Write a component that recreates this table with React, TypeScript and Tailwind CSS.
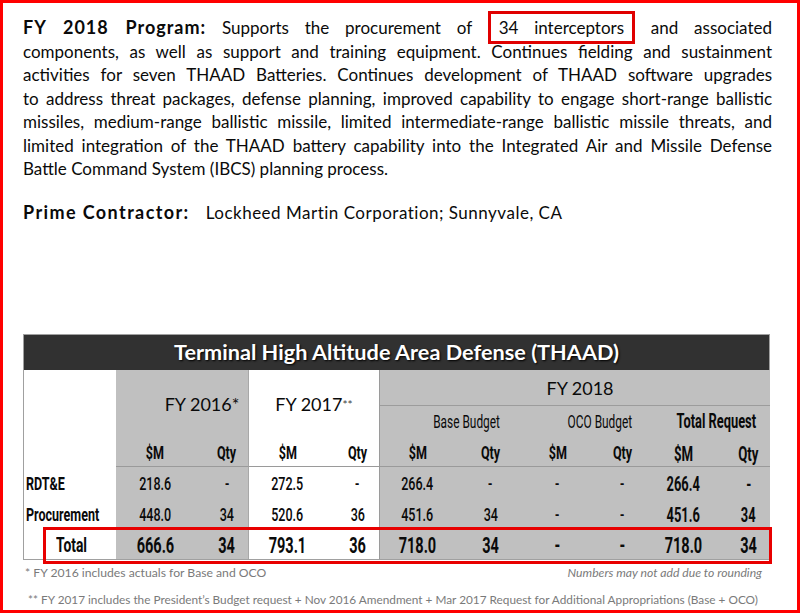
import React from 'react';

const cond = "font-['Roboto',sans-serif]";

type Row = { label: string; vals: string[]; total?: boolean };

const rows: Row[] = [
	{ label: 'RDT&E', vals: ['218.6', '-', '272.5', '-', '266.4', '-', '-', '-', '266.4', '-'] },
	{ label: 'Procurement', vals: ['448.0', '34', '520.6', '36', '451.6', '34', '-', '-', '451.6', '34'] },
	{ label: 'Total', vals: ['666.6', '34', '793.1', '36', '718.0', '34', '-', '-', '718.0', '34'], total: true },
];

// background + nudge per value column so the figures sit where the report puts them
const colBg = ['bg-[#c0c0c0]', 'bg-[#c0c0c0]', 'bg-white', 'bg-white', 'bg-[#c0c0c0]', 'bg-[#c0c0c0]', 'bg-[#c0c0c0]', 'bg-[#c0c0c0]', 'bg-[#c0c0c0]', 'bg-[#c0c0c0]'];
const colPad = ['pl-[12px]', 'pl-[24px]', 'pl-[12px]', 'pl-[22px]', 'pl-[10px]', 'pl-[26px]', 'pl-[30px]', 'pl-[30px]', 'pl-[22px]', 'pl-[22px]'];
const colEdge = ['', 'border-r border-[#a8a8a8]', '', 'border-r border-[#9a9a9a]', '', '', '', '', '', ''];

const justify = 'text-justify [text-align-last:justify]';

// the report uses a very narrow face (Agency FB); squeeze Roboto to match
function Narrow({ children, left }: { children: React.ReactNode; left?: boolean }) {
	return <span className={`inline-block whitespace-nowrap scale-x-[0.66] ${left ? 'origin-left' : 'origin-center'}`}>{children}</span>;
}

export default function App() {
	return (
		<div className="w-[800px] h-[613px] bg-white border-[3px] border-[#ff0000] pt-[13px] pl-[20px] pr-[25px] font-['Lato',sans-serif] text-[#0a0a0a]">
			<div className="text-[17px] leading-[23.5px]">
				<div className={justify}>
					<b className="text-[18px] tracking-[1px]">FY 2018 Program:</b> Supports the procurement of{' '}
					<span className="border-[3px] border-[#e00000] px-[8px] py-[3px]">34 interceptors</span> and associated
				</div>
				<div className={justify}>components, as well as support and training equipment. Continues fielding and sustainment</div>
				<div className={justify}>activities for seven THAAD Batteries. Continues development of THAAD software upgrades</div>
				<div className={justify}>to address threat packages, defense planning, improved capability to engage short-range ballistic</div>
				<div className={justify}>missiles, medium-range ballistic missile, limited intermediate-range ballistic missile threats, and</div>
				<div className={justify}>limited integration of the THAAD battery capability into the Integrated Air and Missile Defense</div>
				<div>Battle Command System (IBCS) planning process.</div>
			</div>

			<div className="mt-[20px] text-[17px] leading-[23.5px]">
				<b className="text-[18px] tracking-[1.4px]">Prime Contractor:</b>
				<span className="ml-[16px] tracking-[0.5px]">Lockheed Martin Corporation; Sunnyvale, CA</span>
			</div>

			<div className="relative mt-[110px] w-[747px]">
				<div className="border border-[#a0a0a0]">
					<div className="h-[35px] bg-[#313131] flex items-center justify-center text-white font-bold text-[21.7px] [text-shadow:1px_1px_2px_#000]">
						Terminal High Altitude Area Defense (THAAD)
					</div>
					<div className="grid grid-cols-[92px_66px_67px_65px_66px_65px_65px_65px_65px_65px_65px] grid-rows-[36px_31px_30px_32px_30px_30px]">
						<div className="row-span-3 bg-white" />
						<div className="col-span-2 row-span-2 bg-[#c0c0c0] border-r border-[#a8a8a8] flex items-center justify-center text-[18px] pl-[40px] pt-[2px]">
							FY 2016*
						</div>
						<div className="col-span-2 row-span-2 bg-white border-r border-[#9a9a9a] flex items-center justify-center text-[18px] pt-[2px]">
							FY 2017<span className="text-[12px] self-start mt-[24px] text-[#444]">**</span>
						</div>
						<div className="col-span-6 bg-[#c0c0c0] border-b border-[#9c9c9c] flex items-center justify-center text-[18px] pl-[10px] pt-[2px]">
							FY 2018
						</div>
						<div className={`col-span-2 bg-[#c0c0c0] flex items-center justify-center pl-[44px] text-[18px] ${cond}`}>
							<Narrow>Base Budget</Narrow>
						</div>
						<div className={`col-span-2 bg-[#c0c0c0] flex items-center justify-center pl-[50px] text-[18px] ${cond}`}>
							<Narrow>OCO Budget</Narrow>
						</div>
						<div className={`col-span-2 bg-[#c0c0c0] flex items-center justify-center pl-[22px] text-[19.5px] font-bold ${cond}`}>
							<Narrow>Total Request</Narrow>
						</div>
						{['$M', 'Qty', '$M', 'Qty', '$M', 'Qty', '$M', 'Qty', '$M', 'Qty'].map((h, i) => (
							<div
								key={'h' + i}
								className={`${colBg[i]} ${colPad[i]} ${colEdge[i]} border-b border-b-[#9a9a9a] flex items-center justify-center pt-[4px] font-bold ${cond} ${i >= 8 ? 'text-[20px]' : 'text-[19px]'}`}
							>
								<Narrow>{h}</Narrow>
							</div>
						))}
						{rows.map((r) => (
							<React.Fragment key={r.label}>
								<div className={`bg-white flex items-center pt-[3px] ${cond} font-bold ${r.total ? 'pl-[32px] text-[21px]' : 'pl-[2px] text-[19px]'}`}>
									<Narrow left>{r.label}</Narrow>
								</div>
								{r.vals.map((v, i) => (
									<div
										key={i}
										className={`${colBg[i]} ${colPad[i]} ${colEdge[i]} flex items-center justify-center pt-[3px] ${cond} ${
											r.total ? 'font-bold text-[22px]' : i >= 8 ? 'font-bold text-[19.5px]' : 'font-medium text-[19px]'
										}`}
									>
										<Narrow>{v}</Narrow>
									</div>
								))}
							</React.Fragment>
						))}
					</div>
				</div>
				<div className="absolute left-[20px] top-[193px] w-[729px] h-[37px] border-[3px] border-[#e80000]" />
			</div>

			<div className="mt-[4px] flex justify-between w-[747px] pl-[2px] pr-[8px] text-[12.2px] leading-[18px] text-[#7a7a7a]">
				<span>* FY 2016 includes actuals for Base and OCO</span>
				<span className="italic">Numbers may not add due to rounding</span>
			</div>
			<div className="mt-[9px] pl-[5px] text-[11.8px] leading-[18px] text-[#7a7a7a] whitespace-nowrap">
				** FY 2017 includes the President’s Budget request + Nov 2016 Amendment + Mar 2017 Request for Additional Appropriations (Base + OCO)
			</div>
		</div>
	);
}
